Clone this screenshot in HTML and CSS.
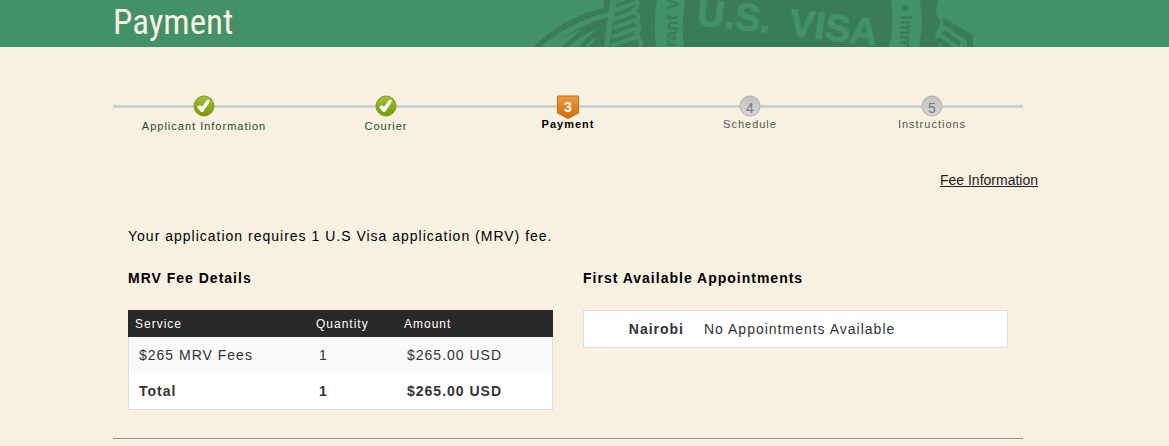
FILE: index.html
```
<!DOCTYPE html>
<html lang="en">
<head>
  <meta charset="UTF-8">
  <meta name="viewport" content="width=device-width, initial-scale=1.0">
  <title>Payment</title>
  <link rel="stylesheet" href="styles.css">
</head>
<body>
  <header class="banner">
    <h1 class="banner-title">Payment</h1>
    <svg class="seal" viewBox="530 0 450 47" width="450" height="47" aria-hidden="true">
      <!-- body of the seal -->
      <path class="dark" d="M533 47Q565 17 603 8L604 0H938Q938 6 935 11L941 22L935 35L940 47Z"/>
      <!-- left wing -->
      <path class="light" d="M540 47Q570 22 608 12L611 0H617L609 47H604L608 17Q576 26 549 47Z"/>
      <path class="light" d="M545 45Q562 39 583 28Q571 38 562 47H549ZM568 47Q580 36 598 28Q586 38 579 47ZM585 47Q590 40 597 37Q592 43 590 47Z"/>
      <path class="stroke-light" d="M615 10Q624 8 636 2M614 19Q623 17 636 11M613 28Q622 25 637 19M612 37Q621 34 637 28M611 46Q620 42 638 37M618 1L630 -3"/>
      <path class="stroke-light" d="M636 -2Q641 5 633 11Q642 16 636 22Q643 29 636 33Q643 41 640 48"/>
      <!-- ring -->
      <path class="light" d="M657 0Q653 24 656 47H684Q681 24 685 0Z"/>
      <path class="light" d="M891 0Q895 24 889 47H919Q924 24 920 0Z"/>
      <text class="ring-text" transform="translate(676 47) rotate(-87)">rant V</text>
      <circle class="dark" cx="905" cy="8" r="3"/>
      <text class="ring-text" transform="translate(901 15) rotate(92)">Imm</text>
      <text class="seal-text" transform="translate(696 25) rotate(6)">U.S.</text>
      <text class="seal-text" transform="translate(788 35) rotate(7)">VISA</text>
      <!-- right wing -->
      <path class="dark" d="M942 17L973 35V47H965L964 40L944 26Z"/>
      <path class="light" d="M935 35L942 24L967 41V47H940Z"/>
      <path class="dark" d="M945 30L961 42L959 46L941 33ZM939 37L953 47H944L936 41Z"/>
    </svg>
  </header>

  <main class="page">
    <svg class="defs" aria-hidden="true">
      <defs>
        <linearGradient id="green" x1="0" y1="0" x2="0" y2="1">
          <stop offset="0" stop-color="#a3c13c"/>
          <stop offset="1" stop-color="#759a00"/>
        </linearGradient>
        <linearGradient id="orange" x1="0" y1="0" x2="0" y2="1">
          <stop offset="0" stop-color="#ec9a44"/>
          <stop offset="1" stop-color="#cf6f08"/>
        </linearGradient>
        <linearGradient id="grey" x1="0" y1="0" x2="0" y2="1">
          <stop offset="0" stop-color="#c2c2c2"/>
          <stop offset="1" stop-color="#d6d6d6"/>
        </linearGradient>
      </defs>
    </svg>

    <ol class="steps">
      <li class="step done">
        <svg class="step-icon" viewBox="0 0 24 23" width="24" height="23">
          <circle cx="12" cy="10" r="10" fill="url(#green)" stroke="#7b9c22"/>
          <path d="M5 11L8 9L10 11L15 4H18L17 7L11 16H9Z" fill="#fff"/>
        </svg>
        <span class="step-label">Applicant Information</span>
      </li>
      <li class="step done">
        <svg class="step-icon" viewBox="0 0 24 23" width="24" height="23">
          <circle cx="12" cy="10" r="10" fill="url(#green)" stroke="#7b9c22"/>
          <path d="M5 11L8 9L10 11L15 4H18L17 7L11 16H9Z" fill="#fff"/>
        </svg>
        <span class="step-label">Courier</span>
      </li>
      <li class="step current">
        <svg class="step-icon" viewBox="0 0 24 23" width="24" height="23">
          <path d="M2 0H22L22.500 1V17L12 22.500L1.500 17V1Z" fill="url(#orange)" stroke="#bb6a10"/>
          <text class="step-number" x="12" y="16">3</text>
        </svg>
        <span class="step-label">Payment</span>
      </li>
      <li class="step">
        <svg class="step-icon" viewBox="0 0 24 23" width="24" height="23">
          <circle cx="12" cy="10" r="10" fill="url(#grey)" stroke="#b2b2b0"/>
          <text class="step-number" x="12" y="17">4</text>
        </svg>
        <span class="step-label">Schedule</span>
      </li>
      <li class="step">
        <svg class="step-icon" viewBox="0 0 24 23" width="24" height="23">
          <circle cx="12" cy="10" r="10" fill="url(#grey)" stroke="#b2b2b0"/>
          <text class="step-number" x="12" y="17">5</text>
        </svg>
        <span class="step-label">Instructions</span>
      </li>
    </ol>

    <div class="fee-link"><a href="#">Fee Information</a></div>

    <div class="content">
      <p class="intro">Your application requires 1 U.S Visa application (MRV) fee.</p>
      <div class="columns">
        <section>
          <h2>MRV Fee Details</h2>
          <table class="fees">
            <colgroup>
              <col class="col-service">
              <col class="col-quantity">
              <col>
            </colgroup>
            <thead>
              <tr><th>Service</th><th>Quantity</th><th>Amount</th></tr>
            </thead>
            <tbody>
              <tr><td>$265 MRV Fees</td><td>1</td><td>$265.00 USD</td></tr>
            </tbody>
            <tfoot>
              <tr><td>Total</td><td>1</td><td>$265.00 USD</td></tr>
            </tfoot>
          </table>
        </section>
        <section>
          <h2>First Available Appointments</h2>
          <table class="appointments">
            <tr><th>Nairobi</th><td>No Appointments Available</td></tr>
          </table>
        </section>
      </div>
    </div>
  </main>
</body>
</html>
```
FILE: styles.css
```
* {
  box-sizing: border-box;
}

body {
  margin: 0;
  background-color: #f8f0e0;
  color: #000;
  font-family: "Liberation Sans", Arial, sans-serif;
  font-size: 14px;
  letter-spacing: 1px;
}

.banner {
  position: relative;
  height: 47px;
  padding-left: 113px;
  background-color: #429168;
  overflow: hidden;
}

.banner-title {
  margin: 0;
  color: #f8f0e0;
  font-family: "Roboto Condensed", Roboto, sans-serif;
  font-size: 35px;
  font-weight: 400;
  line-height: 45px;
  letter-spacing: 0;
}

/* watermark behind the title */
.seal {
  position: absolute;
  top: 0;
  left: 530px;
}

.dark {
  fill: #3a7b5a;
}

.light {
  fill: #429168;
}

.stroke-light {
  fill: none;
  stroke: #429168;
  stroke-width: 4;
}

.ring-text {
  fill: #3a7b5a;
  font-size: 17px;
  font-weight: 700;
  letter-spacing: 0;
}

.seal-text {
  fill: #429168;
  stroke: #429168;
  font-size: 38px;
  font-weight: 700;
  letter-spacing: 0;
}

.page {
  max-width: 1023px;
  padding-left: 113px;
}

.defs {
  position: absolute;
  width: 0;
  height: 0;
}

.steps {
  display: flex;
  height: 77px;
  margin: 48px 0 0;
  padding: 0;
  list-style: none;
  background: linear-gradient(#d0d0d0, #d0d0d0) 0 10px / 100% 3px no-repeat;
}

.step {
  flex: 1;
  display: flex;
  flex-direction: column;
  align-items: center;
  padding-top: 1px;
  color: #555;
  font-size: 11px;
}

.step-icon {
  display: block;
  overflow: visible;
}

.step-label {
  line-height: 10px;
}

.step.done {
  color: #1c4a2c;
}

.step.done .step-label {
  padding-top: 2px;
}

.step.current {
  color: #000;
  font-weight: 700;
}

.step-number {
  fill: #777;
  font-size: 14px;
  letter-spacing: 0;
  text-anchor: middle;
}

.current .step-number {
  fill: #fff;
}

.fee-link {
  margin-right: -15px;
  text-align: right;
  line-height: 16px;
  letter-spacing: 0;
}

.fee-link a {
  color: #222;
}

.content {
  padding: 40px 15px 28px;
  border-bottom: 1px solid #8d8d88;
}

.intro {
  margin: 0;
  line-height: 16px;
}

.columns {
  display: grid;
  grid-template-columns: 1fr 1fr;
  gap: 30px;
  margin-top: 26px;
}

h2 {
  margin: 0 0 24px;
  font-size: 14px;
  line-height: 16px;
}

table {
  width: 100%;
  border-spacing: 0;
  background-color: #fff;
  color: #333;
  text-align: left;
}

.fees {
  table-layout: fixed;
}

.col-service {
  width: 181px;
}

.col-quantity {
  width: 88px;
}

.fees th {
  height: 27px;
  padding: 0 7px;
  background-color: #292929;
  color: #fff;
  font-size: 12px;
  font-weight: 400;
}

.fees td {
  height: 36px;
  padding: 0 10px;
}

.fees td:first-child {
  border-left: 1px solid #ddd;
}

.fees td:last-child {
  border-right: 1px solid #ddd;
}

.fees tbody td {
  background-color: #f9f9f9;
}

.fees tfoot td {
  height: 37px;
  border-bottom: 1px solid #ddd;
  font-weight: 700;
}

.appointments {
  border: 1px solid #ddd;
}

.appointments th {
  width: 110px;
  height: 36px;
  padding: 0 10px 0 0;
  text-align: right;
}

.appointments td {
  padding: 0 10px;
}
```
